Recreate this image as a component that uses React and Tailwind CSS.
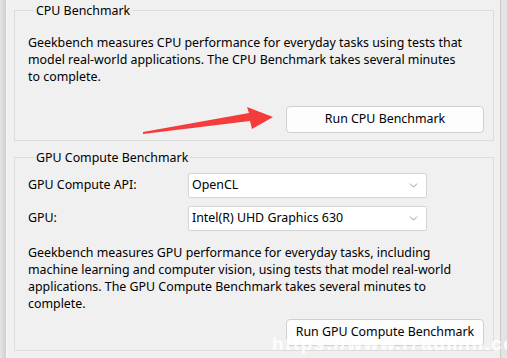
import { ChevronDown } from 'lucide-react';

function Group({ title, children, className }) {
  return (
    <fieldset className={`border border-[#dcdcdc] ${className}`}>
      <legend className="ml-[6px] px-[2px] leading-[17px]">{title}</legend>
      {children}
    </fieldset>
  );
}

function Select({ value }) {
  return (
    <div className="w-[239px] h-[25px] bg-white border border-[#d5d5d5] rounded-[2px] flex items-center justify-between pl-[3px] pr-[6px]">
      <span>{value}</span>
      <ChevronDown size={13} strokeWidth={1.2} className="text-[#606060]" />
    </div>
  );
}

function Button({ children }) {
  return (
    <button className="w-[198px] h-[27px] bg-[#fdfdfd] border border-[#d0d0d0] rounded-[4px] text-black">
      {children}
    </button>
  );
}

export default function App() {
  return (
    <div className="relative w-[507px] h-[358px] overflow-hidden flex bg-[#f0f0f0] text-[12.4px] text-black font-['Noto_Sans',sans-serif]">
      {/* window edge on the left */}
      <div className="w-[7px] bg-gradient-to-r from-[#e6e6e6] to-[#cfcfcf] border-r border-[#f7f7f7]"></div>

      <div className="flex-1 pl-[7px] pr-[6px] pt-[2px] flex flex-col gap-[8px]">
        <Group title="CPU Benchmark" className="pl-[13px] pr-[9px] pt-[15px] pb-[7px]">
          <p className="leading-[17px] whitespace-nowrap">
            Geekbench measures CPU performance for everyday tasks using tests that<br />
            model real-world applications. The CPU Benchmark takes several minutes<br />
            to complete.
          </p>
          <div className="flex justify-end mt-[21px]">
            <Button>Run CPU Benchmark</Button>
          </div>
        </Group>

        <Group title="GPU Compute Benchmark" className="pl-[13px] pr-[9px] pt-[7px] pb-[4px]">
          <div className="flex flex-col gap-[8px]">
            <div className="flex items-center">
              <span className="w-[160px]">GPU Compute API:</span>
              <Select value="OpenCL" />
            </div>
            <div className="flex items-center">
              <span className="w-[160px]">GPU:</span>
              <Select value="Intel(R) UHD Graphics 630" />
            </div>
          </div>
          <p className="leading-[17px] whitespace-nowrap mt-[13px]">
            Geekbench measures GPU performance for everyday tasks, including<br />
            machine learning and computer vision, using tests that model real-world<br />
            applications. The GPU Compute Benchmark takes several minutes to<br />
            complete.
          </p>
          <div className="flex justify-end mt-[7px]">
            <Button>Run GPU Compute Benchmark</Button>
          </div>
        </Group>
      </div>

      {/* scrollbar edge on the right */}
      <div className="w-[7px] bg-[#e4e4e4] border-l border-[#c9c9c9]"></div>

      {/* red annotation arrow */}
      <svg className="absolute left-0 top-0 pointer-events-none" width="507" height="358">
        <polygon points="143,132 249,113 247,107 273,117 252,129 250,121 143,134" fill="#f43c3c" />
      </svg>

      {/* watermark */}
      <div className="absolute left-[272px] top-[330px] text-[19px] font-bold tracking-[1.5px] text-white/85 font-['Liberation_Sans',sans-serif] whitespace-nowrap pointer-events-none">
        https://www.i7admin.cc
      </div>
    </div>
  );
}
